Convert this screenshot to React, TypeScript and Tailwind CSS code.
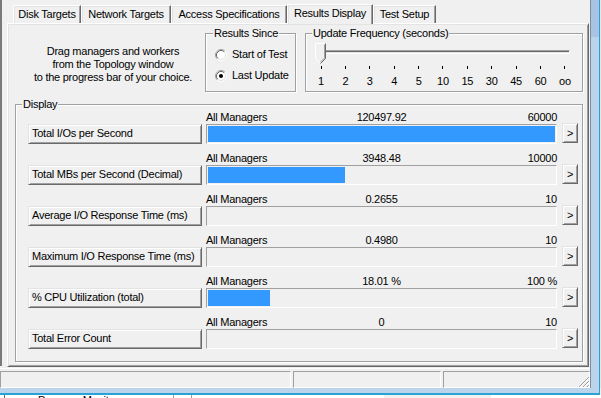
import React from "react";

type Metric = {
  label: string;
  value: string;
  max: string;
  pct: number;
};

const metrics: Metric[] = [
  { label: "Total I/Os per Second", value: "120497.92", max: "60000", pct: 100 },
  { label: "Total MBs per Second (Decimal)", value: "3948.48", max: "10000", pct: 39.5 },
  { label: "Average I/O Response Time (ms)", value: "0.2655", max: "10", pct: 0 },
  { label: "Maximum I/O Response Time (ms)", value: "0.4980", max: "10", pct: 0 },
  { label: "% CPU Utilization (total)", value: "18.01 %", max: "100 %", pct: 18 },
  { label: "Total Error Count", value: "0", max: "10", pct: 0 },
];

const freqs = ["1", "2", "3", "4", "5", "10", "15", "30", "45", "60", "oo"];

const raised =
  "border border-t-[#e3e3e3] border-l-[#e3e3e3] border-r-[#696969] border-b-[#696969] bg-[#f0f0f0] shadow-[inset_1px_1px_0_#fff,inset_-1px_-1px_0_#a0a0a0]";
const sunken = "border border-t-[#a0a0a0] border-l-[#a0a0a0] border-r-white border-b-white";
const etched = "border border-[#a0a0a0] shadow-[inset_1px_1px_0_#fff,1px_1px_0_#fff]";
const tabBase =
  "flex items-center justify-center border-t border-l border-r border-t-white border-l-white border-r-[#696969] bg-[#f0f0f0] shadow-[inset_-1px_0_0_#a0a0a0,inset_1px_1px_0_#e3e3e3]";

function Radio({ checked }: { checked?: boolean }) {
  return (
    <svg width="12" height="12" viewBox="0 0 12 12" className="shrink-0">
      <circle cx="6" cy="6" r="4.5" fill="#fff" />
      <path d="M2.11 9.89A5.5 5.5 0 0 1 9.89 2.11" fill="none" stroke="#a0a0a0" />
      <path d="M9.89 2.11A5.5 5.5 0 0 1 2.11 9.89" fill="none" stroke="#fff" />
      <path d="M2.82 9.18A4.5 4.5 0 0 1 9.18 2.82" fill="none" stroke="#696969" />
      <path d="M9.18 2.82A4.5 4.5 0 0 1 2.82 9.18" fill="none" stroke="#e3e3e3" />
      {checked && <circle cx="6" cy="6" r="2" fill="#000" />}
    </svg>
  );
}

function Thumb() {
  return (
    <svg width="11" height="21" viewBox="0 0 11 21">
      <path d="M0.5 0.5H10.5V15.5L5.5 20.5L0.5 15.5Z" fill="#f0f0f0" />
      <path d="M0.5 15.5V0.5H10" fill="none" stroke="#fff" />
      <path d="M10.5 0.5V15.5L5.5 20.5" fill="none" stroke="#696969" />
      <path d="M9.5 1.5V15L5.5 19" fill="none" stroke="#a0a0a0" />
      <path d="M0.5 15.5L5 20" fill="none" stroke="#fff" />
    </svg>
  );
}

function Grip() {
  return (
    <svg width="12" height="12" viewBox="0 0 12 12">
      <path d="M11 1L1 11M11 5L5 11M11 9L9 11" stroke="#a0a0a0" />
      <path d="M11 2L2 11M11 6L6 11M11 10L10 11" stroke="#fff" />
    </svg>
  );
}

function MetricRow({ m }: { m: Metric }) {
  return (
    <div className="flex flex-col">
      {/* header above the bar */}
      <div className="ml-[178px] grid h-[13px] w-[351px] grid-cols-3">
        <span className="whitespace-nowrap">All Managers</span>
        <span className="text-center whitespace-nowrap">{m.value}</span>
        <span className="text-right whitespace-nowrap">{m.max}</span>
      </div>
      <div className="flex h-[20px] items-start">
        <div className={`${raised} h-[20px] w-[174px] whitespace-nowrap pl-[3px] pt-[2px]`}>{m.label}</div>
        <div className={`${sunken} ml-[4px] h-[20px] w-[351px] bg-[#f0f0f0] p-[1px]`}>
          <div className="h-full bg-[#3399ff]" style={{ width: `${m.pct}%` }} />
        </div>
        <div className={`${raised} ml-[5px] -mt-[1px] flex h-[20px] w-[16px] items-center justify-center`}>&gt;</div>
      </div>
    </div>
  );
}

export default function App() {
  return (
    <div className="flex h-[398px] w-[601px] flex-col overflow-hidden bg-[#f0f0f0] font-['Liberation_Sans',Arial,sans-serif] text-[11px] leading-[13px] tracking-[-0.25px] text-black">
      <div className="flex h-[388px]">
        {/* client area */}
        <div className="flex w-[590px] flex-col">
          <div className="flex h-[368px]">
            <div className="h-[366px] w-[2px] bg-[#7a7a7a]" />
            <div className="ml-[5px] flex w-[582px] flex-col">
              {/* tabs */}
              <div className="flex h-[23px] items-end pl-[6px]">
                <div className={`${tabBase} h-[18px] w-[68px]`}>Disk Targets</div>
                <div className={`${tabBase} h-[18px] w-[90px]`}>Network Targets</div>
                <div className={`${tabBase} h-[18px] w-[116px]`}>Access Specifications</div>
                <div className={`${tabBase} relative z-10 -mb-[1px] h-[20px] w-[86px] pb-[2px]`}>Results Display</div>
                <div className={`${tabBase} h-[18px] w-[63px]`}>Test Setup</div>
              </div>

              {/* panel */}
              <div className="h-[344px] border border-t-white border-l-white border-r-[#696969] border-b-[#696969] shadow-[inset_1px_1px_0_#e3e3e3,inset_-1px_-1px_0_#a0a0a0]">
                <div className="flex items-start pl-[14px] pt-[3px]">
                  <div className="mt-[18px] w-[182px] text-center">
                    <div>Drag managers and workers</div>
                    <div>from the Topology window</div>
                    <div>to the progress bar of your choice.</div>
                  </div>

                  <fieldset className={`${etched} ml-[1px] h-[65px] w-[91px]`}>
                    <legend className="ml-[7px] bg-[#f0f0f0] px-[1px]">Results Since</legend>
                    <div className="flex flex-col gap-[8px] pl-[9px] pt-[8px]">
                      <div className="flex h-[13px] items-center gap-[5px]">
                        <Radio />
                        <span>Start of Test</span>
                      </div>
                      <div className="flex h-[13px] items-center gap-[5px]">
                        <Radio checked />
                        <span>Last Update</span>
                      </div>
                    </div>
                  </fieldset>

                  <fieldset className={`${etched} ml-[9px] h-[65px] w-[278px]`}>
                    <legend className="ml-[6px] bg-[#f0f0f0] px-[1px]">Update Frequency (seconds)</legend>
                    <div className="relative ml-[12px] mt-[10px] h-[4px] w-[252px] border border-t-[#a0a0a0] border-l-[#a0a0a0] border-r-white border-b-white bg-[#e3e3e3] shadow-[inset_1px_1px_0_#696969]">
                      <div className="absolute -left-[4px] -top-[8px]">
                        <Thumb />
                      </div>
                    </div>
                    <div className="ml-[8px] mt-[12px] flex w-[258px] justify-between">
                      {freqs.map((f) => (
                        <div key={f} className="flex w-[14px] flex-col items-center">
                          <div className="h-[3px] w-[1px] bg-black" />
                          <div className="mt-[6px]">{f}</div>
                        </div>
                      ))}
                    </div>
                  </fieldset>
                </div>

                <fieldset className={`${etched} ml-[7px] mt-[6px] h-[264px] w-[568px]`}>
                  <legend className="ml-[6px] bg-[#f0f0f0] px-[1px]">Display</legend>
                  <div className="flex flex-col gap-[8px] pl-[12px]">
                    {metrics.map((m) => (
                      <MetricRow key={m.label} m={m} />
                    ))}
                  </div>
                </fieldset>
              </div>
            </div>
          </div>

          {/* status bar */}
          <div className="flex h-[20px] flex-col border-t border-white pt-[2px]">
            <div className="flex h-[17px]">
              <div className={`${sunken} w-[291px]`} />
              <div className={`${sunken} ml-[2px] w-[148px]`} />
              <div className={`${sunken} relative ml-[2px] flex-1`}>
                <div className="absolute -bottom-[1px] -right-[1px]">
                  <Grip />
                </div>
              </div>
            </div>
          </div>
        </div>

        {/* window frame, right side */}
        <div className="w-[1px] bg-[#7f8c99]" />
        <div className="flex w-[8px] flex-col">
          <div className="h-[37px] bg-[#a9c3e4]" />
          <div className="flex-1 bg-[#bcd3ec]" />
        </div>
        <div className="w-[1px] bg-[#2ba2d6]" />
        <div className="w-[1px] bg-[#e6e6e6]" />
      </div>

      {/* window frame, bottom */}
      <div className="flex h-[5px]">
        <div className="w-[599px] bg-[#bcd3ec]" />
        <div className="w-[1px] bg-[#2ba2d6]" />
      </div>
      <div className="h-[2px] w-[600px] bg-[#2ba2d6]" />
      <div className="flex h-[3px] items-start overflow-hidden bg-white">
        <div className="ml-[4px] h-[3px] w-[1px] bg-[#696969]" />
        <span className="-mt-[1px] ml-[33px] whitespace-nowrap">Progress Monitor</span>
        <div className="ml-[55px] h-[3px] w-[1px] bg-[#a0a0a0]" />
        <div className="ml-[17px] h-[3px] w-[1px] bg-[#a0a0a0]" />
        <div className="ml-[192px] h-[3px] w-[107px] bg-[#f0f0f0]" />
      </div>
    </div>
  );
}
